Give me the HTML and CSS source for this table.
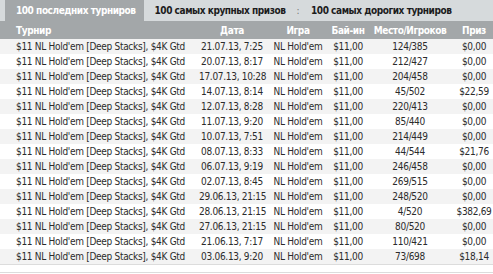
FILE: index.html
```html
<!DOCTYPE html>
<html>
<head>
<meta charset="utf-8">
<link rel="stylesheet" href="styles.css">
</head>
<body>
<div class="page">
  <div class="tabs">
    <div class="tab active">100 последних турниров</div>
    <div class="tab">100 самых крупных призов</div>
    <div class="sep">:</div>
    <div class="tab">100 самых дорогих турниров</div>
  </div>
  <div class="table">
    <div class="row head">
      <div class="c1">Турнир</div><div>Дата</div><div>Игра</div><div>Бай-ин</div><div>Место/Игроков</div><div>Приз</div>
    </div>
    <div class="row"><div class="c1">$11 NL Hold'em [Deep Stacks], $4K Gtd</div><div>21.07.13, 7:25</div><div>NL Hold'em</div><div>$11,00</div><div>124/385</div><div>$0,00</div></div>
    <div class="row"><div class="c1">$11 NL Hold'em [Deep Stacks], $4K Gtd</div><div>20.07.13, 8:17</div><div>NL Hold'em</div><div>$11,00</div><div>212/427</div><div>$0,00</div></div>
    <div class="row"><div class="c1">$11 NL Hold'em [Deep Stacks], $4K Gtd</div><div>17.07.13, 10:28</div><div>NL Hold'em</div><div>$11,00</div><div>204/458</div><div>$0,00</div></div>
    <div class="row"><div class="c1">$11 NL Hold'em [Deep Stacks], $4K Gtd</div><div>14.07.13, 8:14</div><div>NL Hold'em</div><div>$11,00</div><div>45/502</div><div>$22,59</div></div>
    <div class="row"><div class="c1">$11 NL Hold'em [Deep Stacks], $4K Gtd</div><div>12.07.13, 8:28</div><div>NL Hold'em</div><div>$11,00</div><div>220/413</div><div>$0,00</div></div>
    <div class="row"><div class="c1">$11 NL Hold'em [Deep Stacks], $4K Gtd</div><div>11.07.13, 9:20</div><div>NL Hold'em</div><div>$11,00</div><div>85/440</div><div>$0,00</div></div>
    <div class="row"><div class="c1">$11 NL Hold'em [Deep Stacks], $4K Gtd</div><div>10.07.13, 7:51</div><div>NL Hold'em</div><div>$11,00</div><div>214/449</div><div>$0,00</div></div>
    <div class="row"><div class="c1">$11 NL Hold'em [Deep Stacks], $4K Gtd</div><div>08.07.13, 8:33</div><div>NL Hold'em</div><div>$11,00</div><div>44/544</div><div>$21,76</div></div>
    <div class="row"><div class="c1">$11 NL Hold'em [Deep Stacks], $4K Gtd</div><div>06.07.13, 9:19</div><div>NL Hold'em</div><div>$11,00</div><div>246/458</div><div>$0,00</div></div>
    <div class="row"><div class="c1">$11 NL Hold'em [Deep Stacks], $4K Gtd</div><div>02.07.13, 8:45</div><div>NL Hold'em</div><div>$11,00</div><div>269/515</div><div>$0,00</div></div>
    <div class="row"><div class="c1">$11 NL Hold'em [Deep Stacks], $4K Gtd</div><div>29.06.13, 21:15</div><div>NL Hold'em</div><div>$11,00</div><div>248/520</div><div>$0,00</div></div>
    <div class="row"><div class="c1">$11 NL Hold'em [Deep Stacks], $4K Gtd</div><div>28.06.13, 21:15</div><div>NL Hold'em</div><div>$11,00</div><div>4/520</div><div>$382,69</div></div>
    <div class="row"><div class="c1">$11 NL Hold'em [Deep Stacks], $4K Gtd</div><div>27.06.13, 21:15</div><div>NL Hold'em</div><div>$11,00</div><div>80/520</div><div>$0,00</div></div>
    <div class="row"><div class="c1">$11 NL Hold'em [Deep Stacks], $4K Gtd</div><div>21.06.13, 7:17</div><div>NL Hold'em</div><div>$11,00</div><div>110/421</div><div>$0,00</div></div>
    <div class="row"><div class="c1">$11 NL Hold'em [Deep Stacks], $4K Gtd</div><div>03.06.13, 9:20</div><div>NL Hold'em</div><div>$11,00</div><div>73/698</div><div>$18,14</div></div>
  </div>
  <div class="footer"></div>
</div>
</body>
</html>
```
FILE: styles.css
```css
html, body {
  margin: 0;
  padding: 0;
  background: #fff;
}
.page {
  width: 493px;
  font-family: "DejaVu Sans Condensed", "DejaVu Sans", sans-serif;
  font-size: 10px;
  letter-spacing: -0.3px;
  color: #2b2b2b;
}
.tabs {
  display: flex;
  align-items: stretch;
  height: 21px;
  background: #d6dadc;
  padding-left: 5px;
  font-weight: bold;
  letter-spacing: -0.45px;
  white-space: nowrap;
}
.tab {
  display: flex;
  align-items: center;
  padding: 0 10px 1px 11px;
  color: #1c1c1c;
}
.tab.active {
  background: #a3a7a9;
  color: #fff;
  padding-right: 8px;
}
.sep {
  display: flex;
  align-items: center;
  padding: 0 1px 1px;
  color: #777;
  font-weight: normal;
}
.row {
  display: grid;
  grid-template-columns: 199px 66px 66px 34px 90px 38px;
  height: 15px;
  align-items: center;
  white-space: nowrap;
}
.row > div {
  text-align: center;
}
.row > .c1 {
  text-align: left;
  padding-left: 16px;
}
.row.head {
  height: 18px;
  background: #a3a7a9;
  color: #fff;
  font-weight: bold;
  letter-spacing: -0.4px;
}
.row:nth-child(2n) {
  background: #f3f3f3;
}
.table {
  border-bottom: 1px solid #dcdcdc;
}
.footer {
  height: 7px;
  border-bottom: 1px solid #dcdcdc;
}
```
